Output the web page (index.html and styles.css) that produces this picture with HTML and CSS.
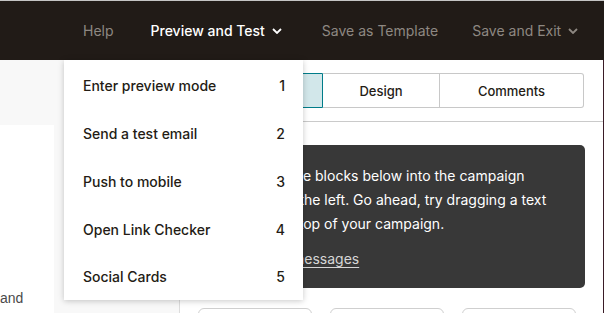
FILE: index.html
```html
<!DOCTYPE html>
<html lang="en">
<head>
    <meta charset="UTF-8">
    <title>Campaign editor</title>
    <link rel="stylesheet" href="styles.css">
</head>
<body>
<div class="topbar">
    <a class="nav-item muted">Help</a>
    <a class="nav-item active">Preview and Test
        <svg class="chev" viewBox="0 0 10 6" width="10" height="6"><path d="M1 1l4 4 4-4" fill="none" stroke="currentColor" stroke-width="1.8"/></svg>
    </a>
    <a class="nav-item muted template">Save as Template</a>
    <a class="nav-item muted">Save and Exit
        <svg class="chev" viewBox="0 0 10 6" width="10" height="6"><path d="M1 1l4 4 4-4" fill="none" stroke="currentColor" stroke-width="1.8"/></svg>
    </a>
</div>

<div class="workspace">
    <div class="sidebar">
        <div class="preview-card">
            <p>and</p>
        </div>
    </div>

    <div class="editor">
        <div class="tabs-bar">
            <div class="tabs">
                <div class="tab current tab-content">Content</div>
                <div class="tab tab-design">Design</div>
                <div class="tab tab-comments">Comments</div>
            </div>
        </div>
        <div class="editor-body">
            <div class="tip">
                <p>Next, drag the blocks below into the campaign<br>
                    designer on the left. Go ahead, try dragging a text<br>
                    block to the top of your campaign.</p>
                <a class="tip-link">Hide these messages</a>
            </div>
            <div class="blocks">
                <div class="block"></div>
                <div class="block"></div>
                <div class="block"></div>
            </div>
        </div>
    </div>

    <ul class="dropdown">
        <li><span>Enter preview mode</span><span>1</span></li>
        <li><span>Send a test email</span><span>2</span></li>
        <li><span>Push to mobile</span><span>3</span></li>
        <li><span>Open Link Checker</span><span>4</span></li>
        <li><span>Social Cards</span><span>5</span></li>
    </ul>
</div>
</body>
</html>
```

FILE: styles.css
```css
* {
    padding: 0;
    margin: 0;
    box-sizing: border-box;
}

body {
    font-family: Inter, "Liberation Sans", sans-serif;
    color: #241c15;
    background: #fff;
    overflow: hidden;
}

/* top bar */
.topbar {
    height: 60px;
    border-top: 1px solid #c4c4c4;
    background: #211b17;
    display: flex;
    align-items: center;
    padding-left: 83px;
    font-size: 14px;
}

.nav-item {
    display: flex;
    align-items: center;
    margin-right: 37px;
    white-space: nowrap;
}

.nav-item.muted {
    color: #8e8882;
}

.nav-item.active {
    color: #fff;
    font-weight: 500;
    margin-right: 40px;
}

.nav-item.template {
    margin-right: 34px;
}

.chev {
    margin-left: 7px;
    margin-top: 1px;
}

/* workspace */
.workspace {
    position: relative;
    display: flex;
    height: 253px;
    border-right: 1px solid #3a1b27;
}

.sidebar {
    width: 179px;
    background: #f8f8f8;
    padding-top: 65px;
}

.preview-card {
    width: 54px;
    height: 100%;
    background: #fff;
    font-family: "Liberation Sans", sans-serif;
    font-size: 14px;
    color: #4a4a4a;
    padding-top: 165px;
}

.editor {
    flex: 1;
    border-left: 1px solid #dcdcdc;
}

.tabs-bar {
    padding: 13px 18px 13px 18px;
    border-bottom: 1px solid #cacaca;
}

.tabs {
    display: flex;
    height: 35px;
    font-size: 13px;
    font-weight: 500;
}

.tab {
    display: flex;
    align-items: center;
    justify-content: center;
    border: 1px solid #c8c8c8;
    border-left: none;
}

.tab-content {
    width: 125px;
}

.tab-design {
    width: 117px;
}

.tab-comments {
    width: 144px;
    border-radius: 0 3px 3px 0;
}

.tab.current {
    background: #d2e7ea;
    border: 1px solid #007c89;
    border-radius: 3px 0 0 3px;
}

.editor-body {
    padding: 23px 18px 0 18px;
}

.tip {
    background: #383838;
    border-radius: 5px;
    color: #fff;
    font-size: 14px;
    line-height: 24px;
    padding: 19px 24px 17px 19px;
}

.tip-link {
    display: inline-block;
    margin-top: 11px;
    color: #d6d6d6;
    text-decoration: underline;
    text-underline-offset: 3px;
}

.blocks {
    display: flex;
    gap: 18px;
    margin-top: 20px;
}

.block {
    width: 114px;
    height: 40px;
    border: 1px solid #cfcfcf;
    border-radius: 6px;
}

/* preview menu */
.dropdown {
    position: absolute;
    top: 0;
    left: 64px;
    width: 239px;
    padding-top: 1px;
    list-style: none;
    background: #fff;
    box-shadow: 0 1px 6px rgba(0, 0, 0, .22);
    font-size: 14px;
    font-weight: 500;
}

.dropdown li {
    height: 48px;
    display: flex;
    align-items: center;
    justify-content: space-between;
    padding: 0 18px 0 19px;
}

.dropdown li:last-child {
    height: 47px;
}
```
